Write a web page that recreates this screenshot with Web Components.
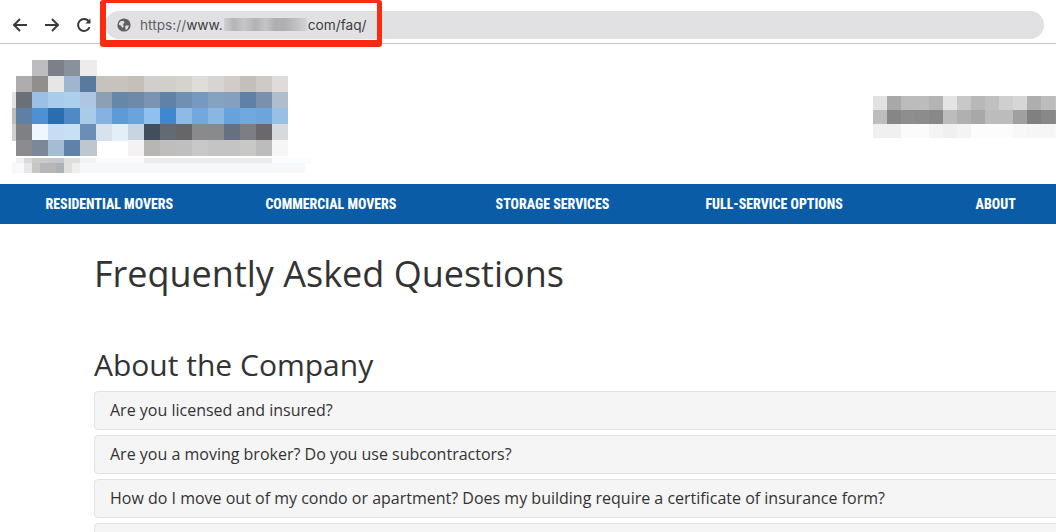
<!DOCTYPE html>
<html lang="en">
<head>
<meta charset="utf-8">
<title>FAQ</title>
<style>
html, body { margin: 0; height: 532px; overflow: hidden; background: #fff; }
body { font-family: "Open Sans", sans-serif; color: #333; }
</style>
</head>
<body>
<browser-bar url-start="https://www." url-end="com/faq/"></browser-bar>
<site-header></site-header>
<site-nav>
  <a>RESIDENTIAL MOVERS</a>
  <a>COMMERCIAL MOVERS</a>
  <a>STORAGE SERVICES</a>
  <a>FULL-SERVICE OPTIONS</a>
  <a>ABOUT</a>
</site-nav>
<faq-page>
  <faq-panel>Are you licensed and insured?</faq-panel>
  <faq-panel>Are you a moving broker? Do you use subcontractors?</faq-panel>
  <faq-panel>How do I move out of my condo or apartment? Does my building require a certificate of insurance form?</faq-panel>
  <faq-panel></faq-panel>
</faq-page>
<script>
// toolbar with the address bar and the red annotation box over it
class BrowserBar extends HTMLElement {
  constructor() {
    super();
    this.attachShadow({ mode: "open" }).innerHTML = `
    <style>
      :host { display: block; position: relative; height: 43px; border-bottom: 1px solid #c4c4c4; background: #fff; box-sizing: content-box; }
      .row { display: flex; align-items: center; height: 100%; padding: 6px 12px 0 11px; box-sizing: border-box; }
      .nav { display: flex; gap: 14px; margin-right: 12px; }
      svg.btn { width: 18px; height: 18px; fill: none; stroke: #3a3a3c; stroke-width: 2; display: block; }
      .pill { flex: 1; height: 28px; border-radius: 14px; background: #e1e1e3; display: flex; align-items: center; padding-left: 12px; font: 13.7px "Inter", "Open Sans", sans-serif; color: #5f6063; }
      .pill svg { width: 14px; height: 14px; margin-right: 9px; flex: none; }
      .dark { color: #3c3c3e; }
      .blur { display: inline-block; width: 83px; height: 13px; margin: 0 1px; background: linear-gradient(90deg,#d0d0d2,#b4b4b6 12%,#c6c6c8 24%,#b2b2b4 38%,#c4c4c6 50%,#aeaeb0 62%,#b0b0b2 74%,#c2c2c4 88%,#d4d4d6); }
      .mark { position: absolute; left: 100px; top: 0; width: 282px; height: 47px; box-sizing: border-box; border: solid #fb2a10; border-width: 3px 5px 7px 6px; border-radius: 3px; }
    </style>
    <div class="row">
      <div class="nav">
        <svg class="btn" viewBox="0 0 18 18"><path d="M16 9H3M9 3 3 9l6 6"/></svg>
        <svg class="btn" viewBox="0 0 18 18"><path d="M2 9h13M9 3l6 6-6 6"/></svg>
        <svg class="btn" viewBox="0 0 18 18"><path d="M14.6 11.2A6 6 0 1 1 13.6 5L15 6.6"/><path d="M15.4 2.4v5h-5" fill="#3a3a3c" stroke="none"/></svg>
      </div>
      <div class="pill">
        <svg viewBox="0 0 14 14"><circle cx="7" cy="7" r="6.6" fill="#5f6063"/><path d="M3 3.4 6.2 2.8 7.6 4.4 5.8 6.4 6.8 8 5.6 10 3.8 7.4 1.6 6.4zM8.6 7.4l3.4.2-1.6 3.4-1.6 1-.6-2.6z" fill="#e1e1e3"/></svg>
        <span>https://</span><span class="dark">${this.getAttribute("url-start").replace("https://", "")}</span><span class="blur"></span><span class="dark">${this.getAttribute("url-end")}</span>
      </div>
    </div>
    <div class="mark"></div>`;
  }
}
customElements.define("browser-bar", BrowserBar);

// a block of flat colour cells standing in for the pixelated parts of the picture
class PixelBlock extends HTMLElement {
  set cells(rows) {
    const size = this.getAttribute("cell").split(",");
    const cw = +size[0], ch = +size[1];
    let out = "";
    rows.forEach((row, y) => {
      row.forEach((c, x) => {
        if (c) out += `<rect x="${x * cw}" y="${y * ch}" width="${cw + .5}" height="${ch + .5}" fill="#${c}"/>`;
      });
    });
    const w = rows[0].length * cw, h = rows.length * ch;
    this.shadowRoot.innerHTML = `<style>:host{display:block}svg{display:block;filter:blur(.6px)}</style>
      <svg width="${w}" height="${h}" viewBox="0 0 ${w} ${h}" shape-rendering="crispEdges">${out}</svg>`;
  }
  constructor() {
    super();
    this.attachShadow({ mode: "open" });
  }
}
customElements.define("pixel-block", PixelBlock);

const LOGO = [
  [null,null,"bdbdc0","7c8088","8a919c","eeecea",null,null,null,null,null,null,null,null,null,null,null,null],
  [null,"aeacac","928e8c","e6e6e6","a0b5cf","587a9f","c8c2bc","c8c2bc","c4bfb9","d2cecb","d2cec9","d6d2cd","e0dcd9","d8d4d1","d1ccc8","c4bfba","cfcac6","dedbd9"],
  ["e4e2e0","6a7076","9cc0e4","a8cdec","accfee","aec6e2","8d9fb4","6688a8","6e8aa8","7a94b2","5f82a6","7090b2","7599bf","85a2c0","85a0be","6080a6","7a90ac","b0bdca"],
  ["c0bcb8","5f7fa4","4e90d4","2a6db0","4f8ac4","a8cbe8","85b2e0","5c9ad8","6aa4dc","8fc0ee","3f88d0","90bae6","72a8de","8ab6e2","66a2dc","70a8e0","6ea4dc","98bfe4"],
  ["cfcfcf","7f8082","eef7ff","c8dcf2","c8e0f4","6a8eb6","d8e2ec","e4eef8","c8d4e0","434e5c","636a72","666668","8a8a8c","888a8c","667080","7c7e84","6a686c","d6dadd"],
  [null,"8c8c90","7a8898","a4bcd4","5e82aa","c0c6d0",null,null,"f4f2f2","b8b6b4","c0bebc","c0bfbf","c8c8c8","c4c4c4","c4c4c4","c8c8c6","bcbcbc","f6f6f6"]
];
// faint strip under the logo, in 8px cells starting at x=8
const run = (...pairs) => pairs.flatMap(([c, n]) => Array(n).fill(c));
const LOGO_FOOT_A = run([null, 1], ["f0f0f0", 1], ["d8d8d8", 1], ["cacaca", 2], ["c4c8cc", 2], ["dedede", 2], ["f2f2f2", 2], ["fbfbfb", 6], ["ecebeb", 16], ["fbfcfd", 5]);
const LOGO_FOOT_B = run(["f7f9fb", 2], ["e6e6e8", 1], ["c8c6c4", 1], ["b6b6b8", 2], ["aeb2b6", 1], ["e2e0de", 1], ["eeeeec", 1], ["f6f9fc", 28]);
const LOGO_FOOT = [LOGO_FOOT_A, LOGO_FOOT_B, LOGO_FOOT_B];
const SLOGAN = [
  ["e2e2e2","a8a8a8","bcbcbc","bcbcbc","b4b4b4","e4e4e4","c8c8c8","b8b8b8","c0c0c0","cfcfcf","d6d6d6","aeaeae","bcbcbc","c4c4c4"],
  ["bdbdbd","868686","8e8e8e","8c8c8c","888888","bcbcbc","b0b0b0","a8a8a8","bcbcbc","bcbcbc","a0a0a0","808080","888888","8c8c8c"],
  ["f0f0f0","f0f0f0","fbfbfb","fbfbfb","f4f4f4","f0f0f0","f4f4f4","fcfcfc","fcfcfc","fcfcfc","f8f8f8","f6f6f6","f6f6f6","f8f8f8"]
];

class SiteHeader extends HTMLElement {
  constructor() {
    super();
    this.attachShadow({ mode: "open" }).innerHTML = `
    <style>
      :host { display: flex; justify-content: space-between; height: 140px; overflow: hidden; }
      .logo { padding-top: 16px; }
      #logo { clip-path: inset(0 0 0 12px); }
      #foot { margin: 2px 0 0 8px; clip-path: inset(0 0 0 4px); }
      .slogan { padding-top: 52px; margin-right: -13px; }
    </style>
    <div class="logo">
      <pixel-block id="logo" cell="16,16"></pixel-block>
      <pixel-block id="foot" cell="8,5"></pixel-block>
    </div>
    <div class="slogan"><pixel-block id="slogan" cell="14,14"></pixel-block></div>`;
    this.shadowRoot.getElementById("logo").cells = LOGO;
    this.shadowRoot.getElementById("foot").cells = LOGO_FOOT;
    this.shadowRoot.getElementById("slogan").cells = SLOGAN;
  }
}
customElements.define("site-header", SiteHeader);

class SiteNav extends HTMLElement {
  constructor() {
    super();
    this.attachShadow({ mode: "open" }).innerHTML = `
    <style>
      :host { display: block; height: 40px; background: #0a5ca6; overflow: hidden; }
      .cols { display: grid; grid-template-columns: repeat(5, 221.6px); margin-left: -1.5px; height: 100%; align-items: center; justify-items: center;
        font: 800 13.9px/40px "Roboto", sans-serif; font-stretch: condensed; color: #fff; }
    </style>
    <div class="cols"><slot></slot></div>`;
  }
}
customElements.define("site-nav", SiteNav);

class FaqPage extends HTMLElement {
  constructor() {
    super();
    this.attachShadow({ mode: "open" }).innerHTML = `
    <style>
      :host { display: block; padding-left: 94px; width: 1000px; height: 308px; overflow: hidden; }
      h1 { font: 400 36px/46px "Open Sans", sans-serif; margin: 0; padding-top: 27px; color: #333; }
      h2 { font: 400 30px/38px "Open Sans", sans-serif; margin: 0; padding-top: 49px; padding-bottom: 7px; color: #333; }
      .list { display: flex; flex-direction: column; gap: 5px; }
    </style>
    <h1>Frequently Asked Questions</h1>
    <h2>About the Company</h2>
    <div class="list"><slot></slot></div>`;
  }
}
customElements.define("faq-page", FaqPage);

class FaqPanel extends HTMLElement {
  constructor() {
    super();
    this.attachShadow({ mode: "open" }).innerHTML = `
    <style>
      :host { display: block; height: 39px; box-sizing: border-box; background: #f5f5f5; border: 1px solid #e2e2e2; border-radius: 4px; padding: 0 15px; font: 16px/37px "Open Sans", sans-serif; color: #333; }
    </style>
    <slot></slot>`;
  }
}
customElements.define("faq-panel", FaqPanel);
</script>
</body>
</html>
